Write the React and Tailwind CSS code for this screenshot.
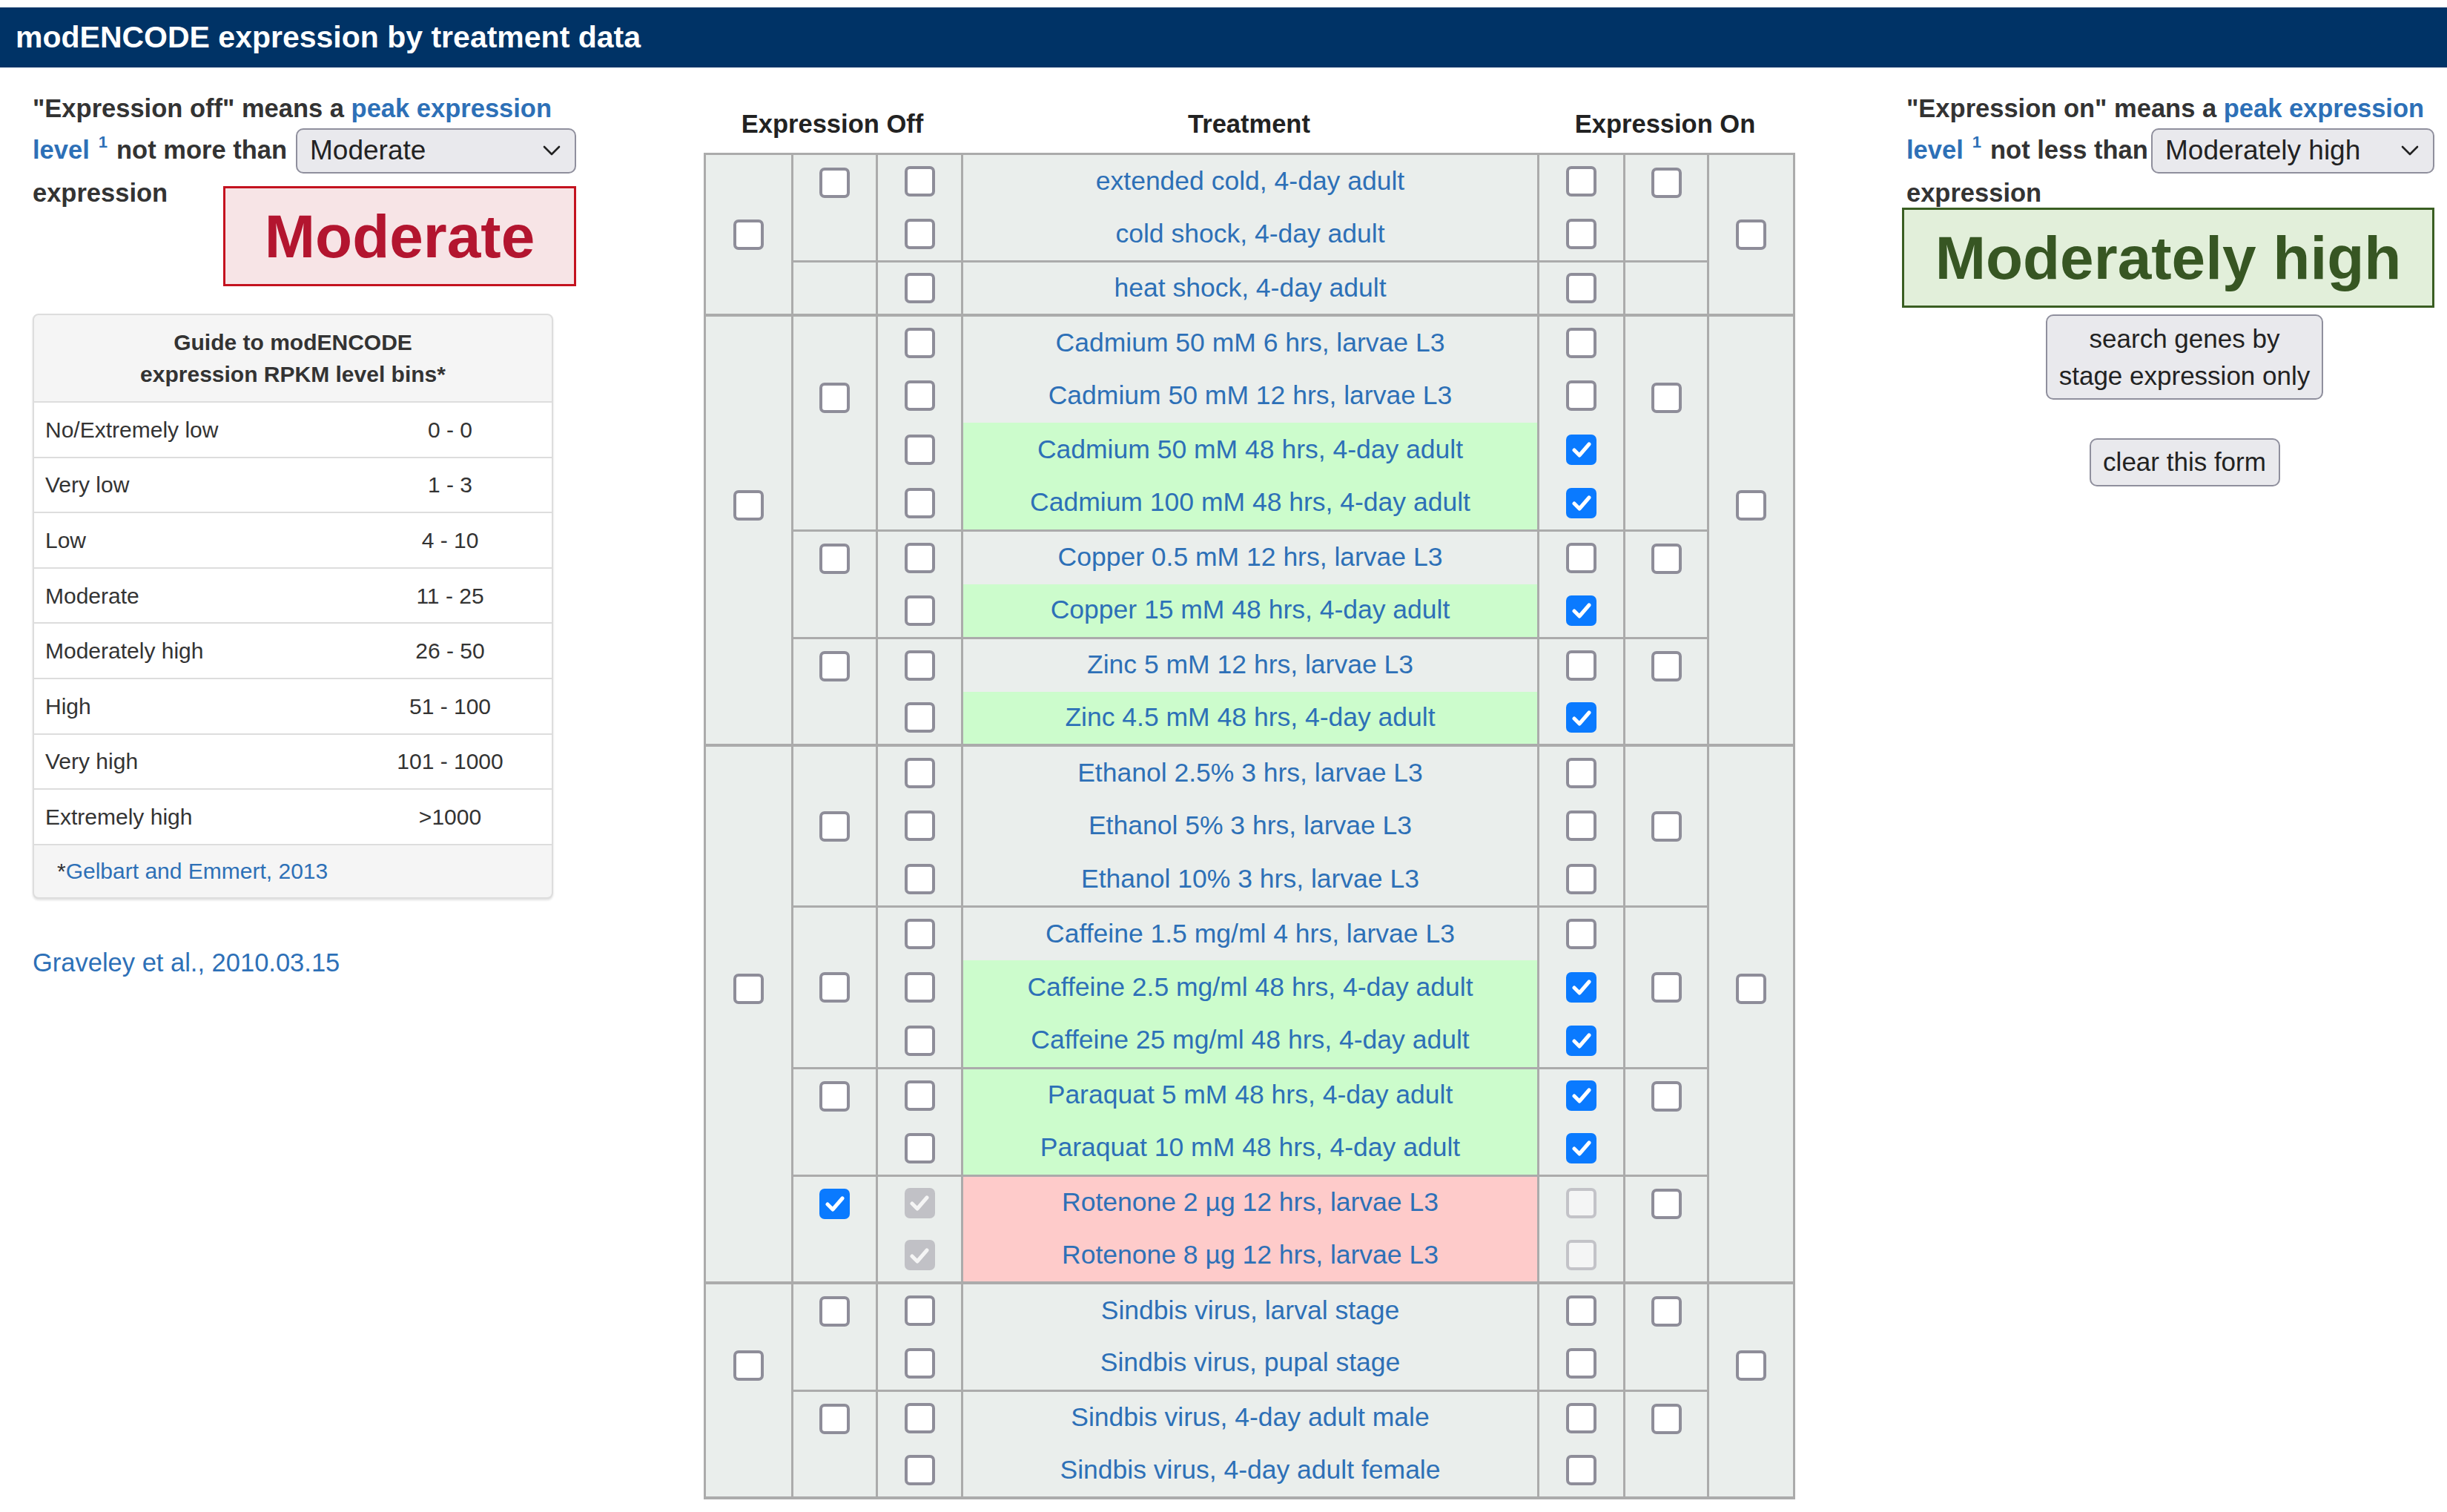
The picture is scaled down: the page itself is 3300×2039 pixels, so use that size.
import React from 'react';

const LINK = 'text-[#2d70b7]';

const bins = [
  ['No/Extremely low', '0 - 0'],
  ['Very low', '1 - 3'],
  ['Low', '4 - 10'],
  ['Moderate', '11 - 25'],
  ['Moderately high', '26 - 50'],
  ['High', '51 - 100'],
  ['Very high', '101 - 1000'],
  ['Extremely high', '>1000'],
];

const groups = [
  [
    { box: true, rows: [{ t: 'extended cold, 4-day adult' }, { t: 'cold shock, 4-day adult' }] },
    { box: false, rows: [{ t: 'heat shock, 4-day adult' }] },
  ],
  [
    {
      box: true,
      rows: [
        { t: 'Cadmium 50 mM 6 hrs, larvae L3' },
        { t: 'Cadmium 50 mM 12 hrs, larvae L3' },
        { t: 'Cadmium 50 mM 48 hrs, 4-day adult', on: true },
        { t: 'Cadmium 100 mM 48 hrs, 4-day adult', on: true },
      ],
    },
    { box: true, rows: [{ t: 'Copper 0.5 mM 12 hrs, larvae L3' }, { t: 'Copper 15 mM 48 hrs, 4-day adult', on: true }] },
    { box: true, rows: [{ t: 'Zinc 5 mM 12 hrs, larvae L3' }, { t: 'Zinc 4.5 mM 48 hrs, 4-day adult', on: true }] },
  ],
  [
    {
      box: true,
      rows: [{ t: 'Ethanol 2.5% 3 hrs, larvae L3' }, { t: 'Ethanol 5% 3 hrs, larvae L3' }, { t: 'Ethanol 10% 3 hrs, larvae L3' }],
    },
    {
      box: true,
      rows: [
        { t: 'Caffeine 1.5 mg/ml 4 hrs, larvae L3' },
        { t: 'Caffeine 2.5 mg/ml 48 hrs, 4-day adult', on: true },
        { t: 'Caffeine 25 mg/ml 48 hrs, 4-day adult', on: true },
      ],
    },
    { box: true, rows: [{ t: 'Paraquat 5 mM 48 hrs, 4-day adult', on: true }, { t: 'Paraquat 10 mM 48 hrs, 4-day adult', on: true }] },
    { box: true, off: true, rows: [{ t: 'Rotenone 2 µg 12 hrs, larvae L3' }, { t: 'Rotenone 8 µg 12 hrs, larvae L3' }] },
  ],
  [
    { box: true, rows: [{ t: 'Sindbis virus, larval stage' }, { t: 'Sindbis virus, pupal stage' }] },
    { box: true, rows: [{ t: 'Sindbis virus, 4-day adult male' }, { t: 'Sindbis virus, 4-day adult female' }] },
  ],
];

const Check = ({ color = 'white' }) => (
  <svg width="26" height="22" viewBox="0 0 26 22" fill="none">
    <path d="M3 12 L10 19 L23 4" stroke={color} strokeWidth="5" strokeLinecap="round" strokeLinejoin="round" />
  </svg>
);

const Box = ({ checked, disabled }) => {
  if (checked && !disabled)
    return (
      <span className="inline-flex w-[41px] h-[41px] rounded-[7px] bg-[#0a7aff] items-center justify-center align-middle">
        <Check />
      </span>
    );
  if (checked && disabled)
    return (
      <span className="inline-flex w-[41px] h-[41px] rounded-[7px] bg-[#c1c1c6] items-center justify-center align-middle">
        <Check color="#f5f5f5" />
      </span>
    );
  if (disabled)
    return <span className="inline-block w-[41px] h-[41px] rounded-[7px] border-[4px] border-[#c3c3c8] bg-[#f4f5f5] align-middle" />;
  return <span className="inline-block w-[41px] h-[41px] rounded-[7px] border-[4px] border-[#8e8d99] bg-white align-middle" />;
};

const Select = ({ value, className }) => (
  <div
    className={`flex items-center justify-between h-[61px] rounded-[10px] border-2 border-[#8f8f9d] bg-[#e9e9ed] pl-[17px] pr-[19px] text-[37px] font-normal text-[#222] ${className}`}
  >
    <span>{value}</span>
    <svg width="24" height="16" viewBox="0 0 24 16" fill="none">
      <path d="M2 3 L12 13 L22 3" stroke="#222" strokeWidth="2.6" strokeLinecap="round" strokeLinejoin="round" />
    </svg>
  </div>
);

const cell = 'border-x-[3px] border-[#ababab] bg-[#eaeeec] text-center align-middle p-0';

function TreatmentTable() {
  const rows = [];
  groups.forEach((subs, gi) => {
    const groupCount = subs.reduce((n, s) => n + s.rows.length, 0);
    let firstInGroup = true;
    subs.forEach((sub, si) => {
      const lastSub = si === subs.length - 1;
      sub.rows.forEach((r, ri) => {
        const firstInSub = ri === 0;
        const lastInSub = ri === sub.rows.length - 1;
        const bottom = lastInSub ? (lastSub ? 'border-b-[4px]' : 'border-b-[3px]') : '';
        const bg = sub.off ? 'bg-[#fecbca]' : r.on ? 'bg-[#ccfccc]' : 'bg-[#eaeeec]';
        rows.push(
          <tr key={`${gi}-${si}-${ri}`} className="h-[72.5px]">
            {firstInGroup && (
              <td rowSpan={groupCount} className={`${cell} border-b-[4px] ${groupCount % 2 === 0 ? 'pb-[68px]' : ''}`}>
                <Box />
              </td>
            )}
            {firstInSub && (
              <td rowSpan={sub.rows.length} className={`${cell} ${lastSub ? 'border-b-[4px]' : 'border-b-[3px]'} ${sub.rows.length % 2 === 0 ? 'pb-[68px]' : ''}`}>
                {sub.box && <Box checked={sub.off} />}
              </td>
            )}
            <td className={`${cell} ${bottom}`}>
              <Box checked={sub.off} disabled={sub.off} />
            </td>
            <td className={`border-x-[3px] border-[#ababab] ${bg} ${bottom} text-center align-middle text-[35.5px] ${LINK}`}>
              {r.t}
            </td>
            <td className={`${cell} ${bottom}`}>
              <Box checked={r.on} disabled={sub.off} />
            </td>
            {firstInSub && (
              <td rowSpan={sub.rows.length} className={`${cell} ${lastSub ? 'border-b-[4px]' : 'border-b-[3px]'} ${sub.rows.length % 2 === 0 ? 'pb-[68px]' : ''}`}>
                {sub.box && <Box />}
              </td>
            )}
            {firstInGroup && (
              <td rowSpan={groupCount} className={`${cell} border-b-[4px] ${groupCount % 2 === 0 ? 'pb-[68px]' : ''}`}>
                <Box />
              </td>
            )}
          </tr>
        );
        firstInGroup = false;
      });
    });
  });

  return (
    <table className="table-fixed border-collapse w-[1469px] border-[3px] border-[#ababab] font-normal">
      <colgroup>
        <col className="w-[118px]" />
        <col className="w-[114px]" />
        <col className="w-[115px]" />
        <col className="w-[777px]" />
        <col className="w-[116px]" />
        <col className="w-[113px]" />
        <col className="w-[116px]" />
      </colgroup>
      <tbody>{rows}</tbody>
    </table>
  );
}

export default function App() {
  return (
    <div className="w-[3300px] min-h-[2039px] bg-white pt-[10px] font-['Liberation_Sans',Arial,sans-serif] text-[#333]">
      <div className="h-[81px] bg-[#003366] flex items-center pl-[21px] text-white font-bold text-[41px]">
        modENCODE expression by treatment data
      </div>

      <div className="flex items-start">
        {/* left: expression off */}
        <div className="ml-[44px] w-[733px] shrink-0 font-bold text-[34.5px]">
          <div className="mt-[27px] h-[56px] leading-[56px] whitespace-nowrap">
            "Expression off" means a <span className={LINK}>peak expression</span>
          </div>
          <div className="h-[58px] flex items-center whitespace-nowrap">
            <span className={LINK}>level</span>
            <span className={`${LINK} text-[22px] ml-[12px] relative -top-[12px]`}>1</span>
            <span className="ml-[12px]">not more than</span>
            <Select value="Moderate" className="ml-auto w-[378px]" />
          </div>
          <div className="flex items-start justify-between">
            <span className="leading-[56px]">expression</span>
            <div className="mt-[19px] w-[476px] h-[135px] border-[3px] border-[#c4121f] bg-[#f7e4e6] flex items-center justify-center text-[82px] text-[#b3152f]">
              Moderate
            </div>
          </div>

          <div className="mt-[37px] w-[702px] rounded-[8px] border-2 border-[#dddddd] bg-[#f5f5f5] shadow-[0_2px_3px_rgba(0,0,0,0.12)] overflow-hidden text-[30px]">
            <div className="h-[116px] flex flex-col items-center justify-center leading-[43px] font-bold">
              <span>Guide to modENCODE</span>
              <span>expression RPKM level bins*</span>
            </div>
            {bins.map(([label, val]) => (
              <div key={label} className="h-[74.6px] flex items-center bg-white border-t-2 border-[#dddddd] font-normal">
                <span className="w-[424px] pl-[15px]">{label}</span>
                <span className="flex-1 text-center">{val}</span>
              </div>
            ))}
            <div className="h-[72px] flex items-center border-t-2 border-[#dddddd] pl-[31px] font-normal">
              *<span className={LINK}>Gelbart and Emmert, 2013</span>
            </div>
          </div>

          <div className={`mt-[64px] leading-[44px] font-normal ${LINK}`}>Graveley et al., 2010.03.15</div>
        </div>

        {/* center: treatment table */}
        <div className="ml-[172px] shrink-0">
          <div className="mt-[51px] mb-[14px] h-[50px] grid grid-cols-[347px_777px_345px] items-center text-center font-bold text-[34.5px] text-[#222]">
            <span>Expression Off</span>
            <span>Treatment</span>
            <span>Expression On</span>
          </div>
          <TreatmentTable />
        </div>

        {/* right: expression on */}
        <div className="ml-[144px] w-[718px] shrink-0 font-bold text-[34.5px]">
          <div className="mt-[27px] h-[56px] leading-[56px] pl-[6px] whitespace-nowrap">
            "Expression on" means a <span className={LINK}>peak expression</span>
          </div>
          <div className="h-[58px] flex items-center pl-[6px] whitespace-nowrap">
            <span className={LINK}>level</span>
            <span className={`${LINK} text-[22px] ml-[12px] relative -top-[12px]`}>1</span>
            <span className="ml-[12px]">not less than</span>
            <Select value="Moderately high" className="ml-auto w-[382px]" />
          </div>
          <div className="h-[48px] leading-[56px] pl-[6px]">expression</div>
          <div className="w-full h-[135px] border-[3px] border-[#3a5e22] bg-[#e2efda] flex items-center justify-center text-[82px] text-[#375623]">
            Moderately high
          </div>
          <div className="flex flex-col items-center pl-[44px] font-normal text-[35px] text-[#222]">
            <button className="mt-[9px] w-[374px] h-[115px] rounded-[10px] border-2 border-[#8f8f9d] bg-[#e9e9ed] leading-[50px]">
              search genes by
              <br />
              stage expression only
            </button>
            <button className="mt-[52px] w-[257px] h-[65px] rounded-[10px] border-2 border-[#8f8f9d] bg-[#e9e9ed]">
              clear this form
            </button>
          </div>
        </div>
      </div>
    </div>
  );
}
